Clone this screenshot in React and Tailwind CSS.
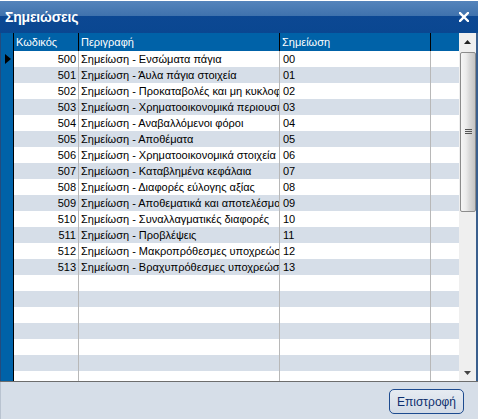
import React from "react";

const rows = [
  ["500", "Σημείωση - Ενσώματα πάγια", "00"],
  ["501", "Σημείωση - Άυλα πάγια στοιχεία", "01"],
  ["502", "Σημείωση - Προκαταβολές και μη κυκλοφορούντα", "02"],
  ["503", "Σημείωση - Χρηματοοικονομικά περιουσιακά στοιχεία", "03"],
  ["504", "Σημείωση - Αναβαλλόμενοι φόροι", "04"],
  ["505", "Σημείωση - Αποθέματα", "05"],
  ["506", "Σημείωση - Χρηματοοικονομικά στοιχεία", "06"],
  ["507", "Σημείωση - Καταβλημένα κεφάλαια", "07"],
  ["508", "Σημείωση - Διαφορές εύλογης αξίας", "08"],
  ["509", "Σημείωση - Αποθεματικά και αποτελέσματα", "09"],
  ["510", "Σημείωση - Συναλλαγματικές διαφορές", "10"],
  ["511", "Σημείωση - Προβλέψεις", "11"],
  ["512", "Σημείωση - Μακροπρόθεσμες υποχρεώσεις", "12"],
  ["513", "Σημείωση - Βραχυπρόθεσμες υποχρεώσεις", "13"],
];

const allRows = Array.from({ length: 21 }, (_, i) => rows[i] || ["", "", ""]);

export default function App() {
  return (
    <div
      className="w-[478px] h-[419px] flex flex-col bg-[#d6dee8] overflow-hidden"
      style={{ fontFamily: '"Liberation Sans", Arial, sans-serif' }}
    >
      {/* Title bar */}
      <div className="h-[33px] shrink-0 border-t border-white flex items-center justify-between pl-[5px] pr-[8px] bg-[linear-gradient(to_bottom,#5584bb_0%,#3f72ad_46%,#0c4893_48%,#0a4791_100%)]">
        <span className="text-white font-bold text-[14px] leading-none tracking-[-0.2px]">Σημειώσεις</span>
        <svg width="10" height="10" viewBox="0 0 10 10" className="mr-[1px]">
          <path d="M1 1 L9 9 M9 1 L1 9" stroke="white" strokeWidth="2.4" strokeLinecap="square" />
        </svg>
      </div>

      {/* Grid area */}
      <div className="h-[348px] shrink-0 flex bg-[#1c3f6e]">
        <div className="w-[1px] bg-[#244b7d]" />
        <div className="w-[458px] flex flex-col overflow-hidden bg-white">
          {/* Header */}
          <div className="h-[18px] shrink-0 flex bg-[#0062a8] text-white text-[11px] leading-[18px]">
            <div className="w-[13px] border-r border-black" />
            <div className="w-[65px] border-r border-black pl-[2px]">Κωδικός</div>
            <div className="w-[201px] border-r border-black pl-[2px]">Περιγραφή</div>
            <div className="w-[151px] border-r border-black pl-[2px]">Σημείωση</div>
            <div className="w-[28px]" />
          </div>
          {/* Body */}
          <div className="flex-1 flex flex-col overflow-hidden">
            {allRows.map((r, i) => (
              <div
                key={i}
                className={`h-[16px] shrink-0 flex text-[11px] leading-[16px] text-black ${
                  i % 2 === 1 ? "bg-[#d6dee8]" : "bg-white"
                }`}
              >
                <div className="w-[13px] shrink-0 border-r border-black bg-[#0062a8] relative">
                  {i === 0 && (
                    <svg width="6" height="10" viewBox="0 0 6 10" className="absolute left-[4px] top-[3px]">
                      <path d="M0 0 L6 5 L0 10 Z" fill="black" />
                    </svg>
                  )}
                </div>
                <div className="w-[65px] shrink-0 border-r border-[#b8b8b8] text-right pr-[2px] overflow-hidden whitespace-nowrap">
                  {r[0]}
                </div>
                <div className="w-[201px] shrink-0 border-r border-[#b8b8b8] pl-[2px] overflow-hidden whitespace-nowrap">
                  {r[1]}
                </div>
                <div className="w-[151px] shrink-0 border-r border-[#b8b8b8] pl-[3px] overflow-hidden whitespace-nowrap">
                  {r[2]}
                </div>
                <div className="w-[28px] shrink-0" />
              </div>
            ))}
          </div>
        </div>
        {/* Scrollbar */}
        <div className="w-[17px] flex flex-col bg-[#efefef]">
          <div className="h-[18px] shrink-0 flex items-center justify-center">
            <svg width="7" height="4" viewBox="0 0 7 4">
              <path d="M0 4 L3.5 0 L7 4 Z" fill="#222" />
            </svg>
          </div>
          <div className="ml-[1px] mt-[1px] h-[160px] w-[16px] border border-[#8c8c8c] rounded-[2px] bg-[linear-gradient(to_right,#f6f6f6_0%,#ececec_35%,#d6d6d6_65%,#c4c4c4_100%)] flex items-center justify-center">
            <div className="flex flex-col gap-[1px] mt-[-2px]">
              <div className="w-[7px] h-[1px] bg-[#555]" />
              <div className="w-[7px] h-[1px] bg-[#555]" />
              <div className="w-[7px] h-[1px] bg-[#555]" />
            </div>
          </div>
          <div className="flex-1" />
          <div className="h-[16px] shrink-0 flex items-center justify-center">
            <svg width="7" height="4" viewBox="0 0 7 4">
              <path d="M0 0 L3.5 4 L7 0 Z" fill="#444" />
            </svg>
          </div>
        </div>
        <div className="w-[2px] bg-[#3a5f8e]" />
      </div>
      <div className="h-[1px] shrink-0 bg-[#6d6d6d]" />

      {/* Footer */}
      <div className="flex-1 flex justify-end items-start pt-[7px] pr-[14px] border-l border-[#b9c3d0]">
        <button className="w-[75px] h-[25px] rounded-[5px] border border-[#1d4b8f] bg-[linear-gradient(to_bottom,#e6ebf2,#d3dbe6)] text-[#0d2f6e] text-[12px] leading-none">
          Επιστροφή
        </button>
      </div>
    </div>
  );
}
